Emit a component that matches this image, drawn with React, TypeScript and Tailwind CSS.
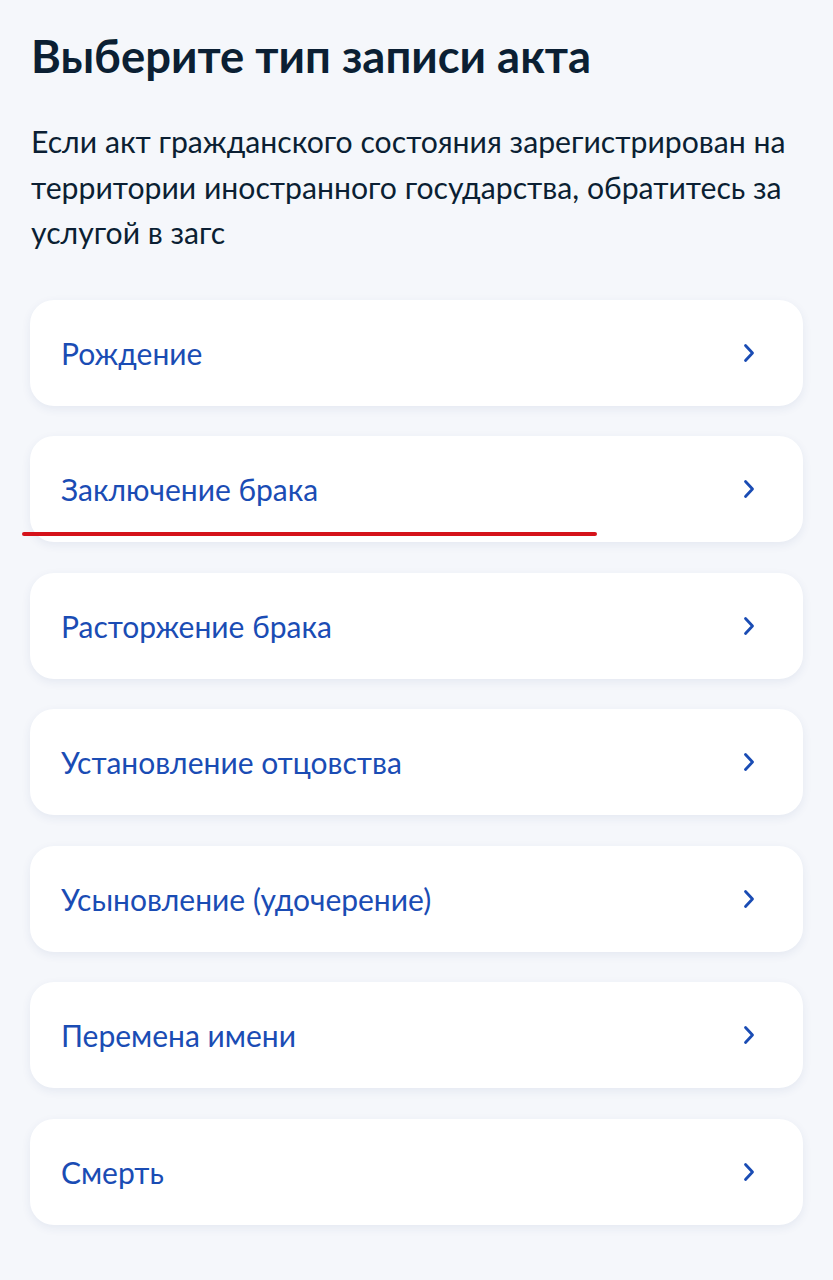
const items = [
  "Рождение",
  "Заключение брака",
  "Расторжение брака",
  "Установление отцовства",
  "Усыновление (удочерение)",
  "Перемена имени",
  "Смерть",
]

function Chevron() {
  return (
    <svg width="12" height="20" viewBox="0 0 12 20" fill="none" className="shrink-0">
      <path d="M2.5 2.5 L9.5 10 L2.5 17.5" stroke="#1a4cb4" strokeWidth="2.8" strokeLinecap="round" strokeLinejoin="round" />
    </svg>
  )
}

export default function App() {
  return (
    <div className="relative min-h-[1280px] w-full bg-[#f5f7fb] font-['Lato','Noto_Sans',sans-serif]">
      <div className="px-[30px] pt-[29px]">
        <h1 className="pl-px text-[45.4px] font-bold leading-[54px] text-[#0b1f33]">Выберите тип записи акта</h1>
        <p className="mt-[36px] pl-px text-[30.2px] leading-[45.5px] text-[#0b1f33]">
          Если акт гражданского состояния зарегистрирован на территории иностранного государства, обратитесь за услугой в загс
        </p>
        <div className="mt-[44px] flex flex-col gap-[30.5px]">
          {items.map((t) => (
            <div
              key={t}
              className="flex h-[106px] items-center justify-between rounded-[24px] bg-white pl-[31px] pr-[48px] shadow-[0_3px_10px_rgba(40,70,130,0.08)]"
            >
              <span className="text-[30px] leading-none text-[#1a4cb4]">{t}</span>
              <Chevron />
            </div>
          ))}
        </div>
      </div>
      <div className="absolute left-[22px] top-[532px] h-[4px] w-[575px] rounded-full bg-[#d5121a]" />
    </div>
  )
}
